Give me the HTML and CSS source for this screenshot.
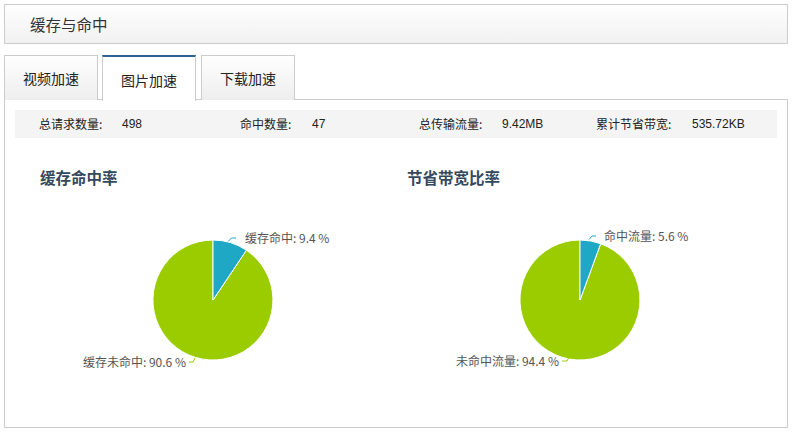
FILE: index.html
```html
<!DOCTYPE html>
<html lang="zh-CN">
<head>
    <meta charset="UTF-8">
    <title>缓存与命中</title>
    <link rel="stylesheet" href="styles.css">
</head>
<body>
    <div class="page-header">缓存与命中</div>

    <div class="tabs">
        <div class="tab">视频加速</div>
        <div class="tab active">图片加速</div>
        <div class="tab">下载加速</div>
    </div>

    <div class="panel">
        <div class="stats">
            <div class="stat"><span class="stat-label">总请求数量:</span><span class="stat-value">498</span></div>
            <div class="stat"><span class="stat-label">命中数量:</span><span class="stat-value">47</span></div>
            <div class="stat"><span class="stat-label">总传输流量:</span><span class="stat-value">9.42MB</span></div>
            <div class="stat"><span class="stat-label">累计节省带宽:</span><span class="stat-value">535.72KB</span></div>
        </div>

        <div class="charts">
            <div class="chart">
                <div class="chart-title">缓存命中率</div>
                <svg class="pie" width="367" height="200" viewBox="0 0 367 200">
                    <!-- center 198,105 r 60 ; 9.4% -->
                    <path d="M198 105 L198 45 A60 60 0 1 0 231.4 55.2 Z" fill="#9bcc00" stroke="#fff" stroke-width="1"/>
                    <path d="M198 105 L198 45 A60 60 0 0 1 231.4 55.2 Z" fill="#1fa8c6" stroke="#fff" stroke-width="1"/>
                    <path d="M213 46.5 L216.5 43 L221 43" fill="none" stroke="#1fa8c6"/>
                    <text class="pie-label" x="230" y="48">缓存命中: 9.4 %</text>
                    <path d="M180 163 L178 167 L174 167" fill="none" stroke="#9bcc00"/>
                    <text class="pie-label" x="171" y="172" text-anchor="end">缓存未命中: 90.6 %</text>
                </svg>
            </div>
            <div class="chart">
                <div class="chart-title">节省带宽比率</div>
                <svg class="pie" width="367" height="200" viewBox="0 0 367 200">
                    <!-- center 198,105 r 60 ; 5.6% -->
                    <path d="M198 105 L198 45 A60 60 0 1 0 218.7 48.7 Z" fill="#9bcc00" stroke="#fff" stroke-width="1"/>
                    <path d="M198 105 L198 45 A60 60 0 0 1 218.7 48.7 Z" fill="#1fa8c6" stroke="#fff" stroke-width="1"/>
                    <path d="M207 44.5 L210 41 L214 41" fill="none" stroke="#1fa8c6"/>
                    <text class="pie-label" x="222" y="46">命中流量: 5.6 %</text>
                    <path d="M187 162 L185 166 L180 166" fill="none" stroke="#9bcc00"/>
                    <text class="pie-label" x="177" y="171" text-anchor="end">未命中流量: 94.4 %</text>
                </svg>
            </div>
        </div>
    </div>
</body>
</html>
```

FILE: styles.css
```css
body {
    margin: 0;
    padding: 4px 9px 0 4px;
    font-family: "Liberation Sans", "Noto Sans CJK SC", sans-serif;
    color: #333;
    background: #fff;
}

.page-header {
    height: 38px;
    line-height: 38px;
    padding-left: 25px;
    border: 1px solid #ccc;
    background: linear-gradient(#fefefe, #f1f1f1);
    font-family: "Noto Sans CJK SC", sans-serif;
    font-size: 15.5px;
    color: #333;
}

.tabs {
    display: flex;
    gap: 4px;
    margin-top: 10px;
    height: 45px;
    align-items: flex-end;
}

.tab {
    width: 92px;
    height: 44px;
    line-height: 44px;
    text-align: center;
    border: 1px solid #ccc;
    border-bottom: none;
    background: linear-gradient(#fefefe, #eeeeee);
    font-family: "Noto Sans CJK SC", sans-serif;
    font-size: 14px;
    color: #222;
    margin-bottom: -1px;
}

.tab.active {
    height: 44px;
    line-height: 46px;
    border-top: 2px solid #2d6395;
    background: #fff;
    position: relative;
    z-index: 1;
    margin-bottom: -2px;
}

.tab.active + .tab {
    margin-left: 1px;
}

.panel {
    border: 1px solid #ccc;
    height: 317px;
    padding: 10px 10px 0 10px;
}

.stats {
    display: flex;
    height: 28px;
    line-height: 28px;
    background: #f4f4f4;
    font-size: 12px;
    color: #222;
}

.stat {
    display: flex;
    align-items: center;
}

.stat:nth-child(1) { margin-left: 24px; width: 201px; }
.stat:nth-child(2) { width: 179px; }
.stat:nth-child(3) { width: 177px; }

.stat-label {
    font-family: "Noto Sans CJK SC", sans-serif;
    font-size: 12px;
    line-height: 28px;
}

.stat-value {
    line-height: 28px;
}

.stat:nth-child(1) .stat-label { width: 83px; }
.stat:nth-child(2) .stat-label { width: 72px; }
.stat:nth-child(3) .stat-label { width: 83px; }
.stat:nth-child(4) .stat-label { width: 96px; }

.charts {
    display: grid;
    grid-template-columns: 367px 367px;
    margin-top: 27px;
}

.chart-title {
    padding-left: 25px;
    font-family: "Noto Sans CJK SC", sans-serif;
    font-size: 15.5px;
    font-weight: bold;
    color: #34495e;
    height: 24px;
    line-height: 24px;
}

.pie {
    display: block;
    margin-top: 6px;
}

.pie-label {
    font-family: "Noto Sans CJK SC", "Liberation Sans", sans-serif;
    font-size: 12px;
    fill: #555;
}
```
